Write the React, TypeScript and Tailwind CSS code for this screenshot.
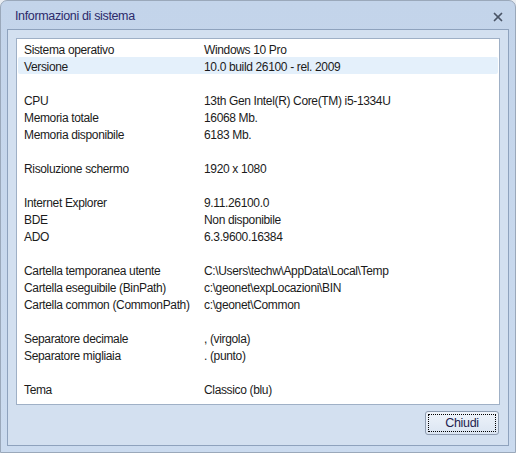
import { X } from "lucide-react";

type Row = { label: string; value: string } | null;

const rows: Row[] = [
  { label: "Sistema operativo", value: "Windows 10 Pro" },
  { label: "Versione", value: "10.0 build 26100 - rel. 2009" },
  null,
  { label: "CPU", value: "13th Gen Intel(R) Core(TM) i5-1334U" },
  { label: "Memoria totale", value: "16068 Mb." },
  { label: "Memoria disponibile", value: "6183 Mb." },
  null,
  { label: "Risoluzione schermo", value: "1920 x 1080" },
  null,
  { label: "Internet Explorer", value: "9.11.26100.0" },
  { label: "BDE", value: "Non disponibile" },
  { label: "ADO", value: "6.3.9600.16384" },
  null,
  { label: "Cartella temporanea utente", value: "C:\\Users\\techw\\AppData\\Local\\Temp" },
  { label: "Cartella eseguibile (BinPath)", value: "c:\\geonet\\expLocazioni\\BIN" },
  { label: "Cartella common (CommonPath)", value: "c:\\geonet\\Common" },
  null,
  { label: "Separatore decimale", value: ", (virgola)" },
  { label: "Separatore migliaia", value: ". (punto)" },
  null,
  { label: "Tema", value: "Classico (blu)" },
];

export default function App() {
  return (
    <div
      className="h-[453px] w-[516px] bg-[#e9edf2] text-[12px] tracking-[-0.35px] text-[#1b1b1b]"
      style={{ fontFamily: '"Liberation Sans", Arial, sans-serif' }}
    >
      <div className="flex h-full flex-col rounded-t-[7px] border border-[#9aa8ba] bg-gradient-to-b from-[#c3d4ea] to-[#cbdbef]">
        {/* title bar */}
        <div className="flex h-[28px] shrink-0 items-center justify-between pl-[14px] pr-[10px] pt-[3px]">
          <span className="text-[12.5px] text-[#2c2a6a]">Informazioni di sistema</span>
          <X className="h-[14px] w-[14px] text-[#4a5466]" strokeWidth={3} />
        </div>
        {/* body */}
        <div className="mx-[6px] mb-[6px] flex flex-1 flex-col border border-[#8ea2bd] bg-[#d3e0f0] px-[8px] pt-[8px]">
          <div className="flex h-[367px] flex-col border border-[#9fb0c6] bg-white px-px pt-[1px]">
            {rows.map((r, i) =>
              r ? (
                <div
                  key={i}
                  className={`flex h-[17px] items-center rounded-[2px] pl-[6px] pt-[2px] ${
                    i === 1 ? "bg-[#e4f0fb]" : ""
                  }`}
                >
                  <span className="w-[180px]">{r.label}</span>
                  <span>{r.value}</span>
                </div>
              ) : (
                <div key={i} className="h-[17px]" />
              )
            )}
          </div>
          <div className="flex justify-end pt-[6px] pr-[1px]">
            <button className="flex h-[24px] w-[74px] items-center justify-center rounded-[3px] border border-[#8e9cb0] bg-gradient-to-b from-[#eef3fa] to-[#dbe5f2] p-[2px]">
              <span className="flex h-full w-full items-center justify-center border border-dotted border-black text-[12.5px] text-[#1e1e50]">
                Chiudi
              </span>
            </button>
          </div>
        </div>
      </div>
    </div>
  );
}
